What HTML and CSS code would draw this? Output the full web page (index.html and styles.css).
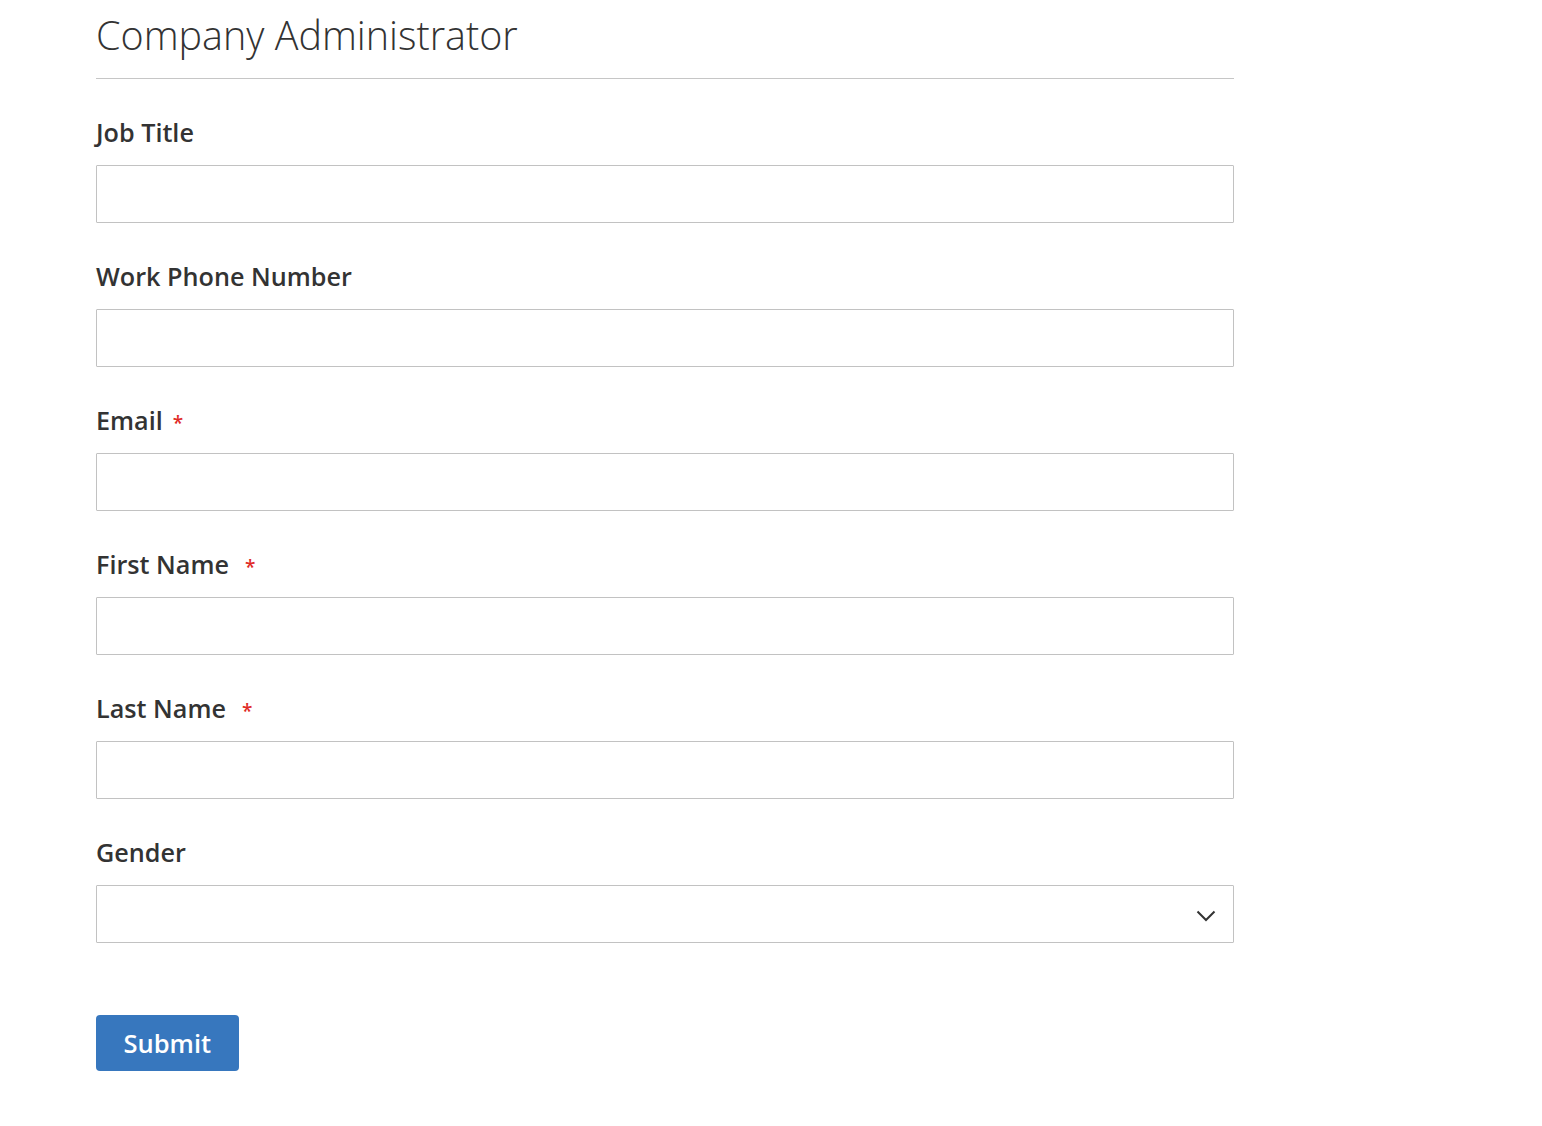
FILE: index.html
```html
<!DOCTYPE html>
<html>
<head>
<meta charset="utf-8">
<link rel="stylesheet" href="styles.css">
</head>
<body>
<form class="form">
  <fieldset class="fieldset">
    <legend class="legend">Company Administrator</legend>
    <div class="field">
      <label class="label">Job Title</label>
      <input class="input" type="text">
    </div>
    <div class="field">
      <label class="label">Work Phone Number</label>
      <input class="input" type="text">
    </div>
    <div class="field">
      <label class="label">Email<span class="req">*</span></label>
      <input class="input" type="text">
    </div>
    <div class="field">
      <label class="label">First Name<span class="req wide">*</span></label>
      <input class="input" type="text">
    </div>
    <div class="field">
      <label class="label">Last Name<span class="req wide">*</span></label>
      <input class="input" type="text">
    </div>
    <div class="field">
      <label class="label">Gender</label>
      <div class="select">
        <svg class="chev" width="20" height="12" viewBox="0 0 20 12"><path d="M1.5 1.5 L10 10 L18.5 1.5" fill="none" stroke="#333" stroke-width="2"/></svg>
      </div>
    </div>
  </fieldset>
  <div class="actions">
    <button class="submit" type="button">Submit</button>
  </div>
</form>
</body>
</html>
```
FILE: styles.css
```css
* { box-sizing: border-box; }
html, body { margin: 0; padding: 0; background: #fff; }
body { font-family: "Open Sans", "Noto Sans", sans-serif; color: #333; }
.form { width: 1138px; margin-left: 96px; }
.fieldset { border: 0; margin: 0; padding: 0; }
.legend {
  display: block; width: 100%; padding: 0; margin: 0;
  font-size: 39.5px; font-weight: 300; line-height: 40px; color: #333;
  padding-top: 15px; padding-bottom: 23px;
  border-bottom: 1px solid #c6c6c6;
}
.field { display: flex; flex-direction: column; }
.label {
  font-size: 25.2px; font-weight: 600; line-height: 34px; height: 34px; color: #333;
  margin-top: 36px; margin-bottom: 16px;
}
.req { color: #e02b27; margin-left: 10px; font-size: 19px; line-height: 0; vertical-align: baseline; }
.req.wide { margin-left: 16px; }
.input, .select {
  height: 58px; width: 100%; border: 1px solid #c2c2c2; border-radius: 1px;
  background: #fff; margin: 0; flex: none;
}
.select { display: flex; align-items: center; justify-content: flex-end; padding-right: 17px; }
.chev { display: block; margin-top: 4px; }
.actions { margin-top: 72px; }
.submit {
  height: 56px; padding: 0 27.5px; background: #3777be; color: #fff; border: 0;
  border-radius: 4px; font-family: "Open Sans", sans-serif; font-size: 25.5px; font-weight: 600;
}
```
